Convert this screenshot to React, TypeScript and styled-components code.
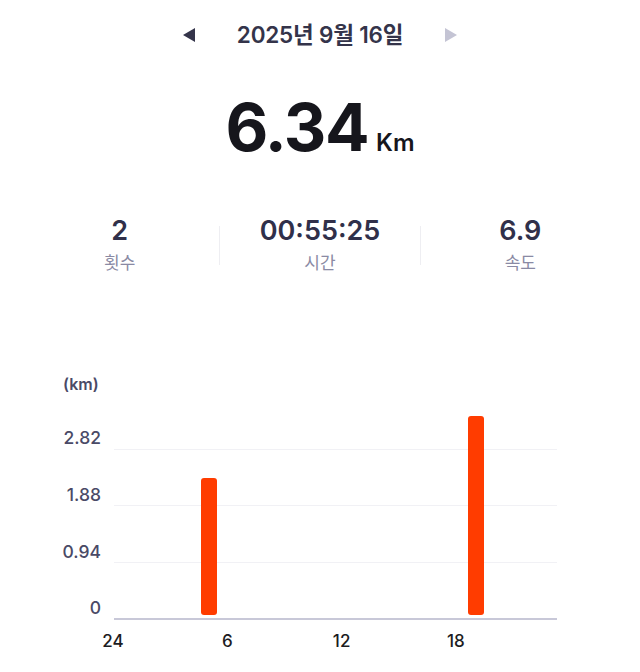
import React from "react";
import styled, { createGlobalStyle } from "styled-components";

const GlobalStyle = createGlobalStyle`
  body {
    margin: 0;
    background: #ffffff;
    font-family: "Inter", "Noto Sans CJK KR", sans-serif;
  }
`;

const HOUR_PX = 19.05;
const KM_PX = 52.7;

interface Run {
  hour: number;
  km: number;
}

const runs: Run[] = [
  { hour: 5, km: 2.6 },
  { hour: 19, km: 3.78 },
];

const yTicks = ["2.82", "1.88", "0.94", "0"];
const xTicks = [
  { hour: 0, label: "24" },
  { hour: 6, label: "6" },
  { hour: 12, label: "12" },
  { hour: 18, label: "18" },
];

const Page = styled.div`
  width: 640px;
  height: 672px;
  overflow: hidden;
`;

const DateNav = styled.div`
  display: flex;
  justify-content: center;
  align-items: center;
  gap: 42px;
  padding-top: 20px;
  height: 30px;
`;

const Arrow = styled.span<{ $dir: "left" | "right"; $muted?: boolean }>`
  width: 0;
  height: 0;
  border-top: 7px solid transparent;
  border-bottom: 7px solid transparent;
  ${(p) =>
    p.$dir === "left"
      ? `border-right: 12px solid ${p.$muted ? "#c4c4d4" : "#34344a"};`
      : `border-left: 12px solid ${p.$muted ? "#c4c4d4" : "#34344a"};`}
`;

const DateText = styled.div`
  font-size: 22.5px;
  font-weight: 600;
  color: #34344a;
  line-height: 30px;
  letter-spacing: -0.2px;
`;

const Total = styled.div`
  display: flex;
  justify-content: center;
  align-items: baseline;
  gap: 8px;
  margin-top: 44px;
`;

const TotalValue = styled.div`
  font-size: 66px;
  font-weight: 700;
  line-height: 1;
  color: #16161c;
  letter-spacing: -1.5px;
`;

const TotalUnit = styled.div`
  font-size: 24px;
  font-weight: 600;
  color: #16161c;
  margin-bottom: 3px;
`;

const Stats = styled.div`
  display: grid;
  grid-template-columns: 1fr 1px 1fr 1px 1fr;
  align-items: center;
  width: 600px;
  margin: 57px auto 0;
`;

const Stat = styled.div`
  display: flex;
  flex-direction: column;
  align-items: center;
  gap: 8px;
`;

const StatValue = styled.div`
  font-size: 27px;
  font-weight: 600;
  line-height: 1;
  color: #30304a;
`;

const StatLabel = styled.div`
  font-size: 17px;
  line-height: 22px;
  color: #8a8aa4;
`;

const Divider = styled.div`
  width: 1px;
  height: 39px;
  background: #eeeef2;
`;

const Chart = styled.div`
  margin-top: 101px;
  padding-left: 60px;
`;

const Unit = styled.div`
  font-size: 16px;
  font-weight: 600;
  line-height: 18px;
  color: #4a4a66;
  padding-left: 3px;
`;

const ChartGrid = styled.div`
  display: grid;
  grid-template-columns: 41px 443px;
  grid-template-rows: repeat(4, 56.7px);
  column-gap: 13px;
`;

const YLabel = styled.div`
  grid-column: 1;
  align-self: end;
  text-align: right;
  font-size: 17.5px;
  font-weight: 500;
  line-height: 1;
  color: #4a4a66;
  padding-bottom: 3px;
`;

const GridLine = styled.div<{ $base?: boolean }>`
  grid-column: 2;
  border-bottom: ${(p) => (p.$base ? "2px solid #c8c8d8" : "1px solid #f1f1f5")};
`;

const Plot = styled.div`
  grid-column: 2;
  grid-row: 1 / -1;
  position: relative;
`;

const Bar = styled.div`
  position: absolute;
  bottom: 5px;
  width: 16px;
  background: #ff3c00;
  border-radius: 3px;
`;

const XAxis = styled.div`
  position: relative;
  margin-left: 54px;
  margin-top: 11px;
  height: 20px;
`;

const XLabel = styled.span`
  position: absolute;
  top: 0;
  transform: translateX(-50%);
  font-size: 17px;
  font-weight: 500;
  line-height: 20px;
  color: #1c1c22;
`;

export default function App() {
  return (
    <Page>
      <GlobalStyle />
      <DateNav>
        <Arrow $dir="left" />
        <DateText>2025년 9월 16일</DateText>
        <Arrow $dir="right" $muted />
      </DateNav>

      <Total>
        <TotalValue>6.34</TotalValue>
        <TotalUnit>Km</TotalUnit>
      </Total>

      <Stats>
        <Stat>
          <StatValue>2</StatValue>
          <StatLabel>횟수</StatLabel>
        </Stat>
        <Divider />
        <Stat>
          <StatValue>00:55:25</StatValue>
          <StatLabel>시간</StatLabel>
        </Stat>
        <Divider />
        <Stat>
          <StatValue>6.9</StatValue>
          <StatLabel>속도</StatLabel>
        </Stat>
      </Stats>

      <Chart>
        <Unit>(km)</Unit>
        <ChartGrid>
          {yTicks.map((t, i) => (
            <React.Fragment key={t}>
              <YLabel style={{ gridRow: i + 1 }}>{t}</YLabel>
              <GridLine style={{ gridRow: i + 1 }} $base={i === yTicks.length - 1} />
            </React.Fragment>
          ))}
          <Plot>
            {runs.map((r) => (
              <Bar
                key={r.hour}
                style={{ left: r.hour * HOUR_PX - 8, height: r.km * KM_PX }}
              />
            ))}
          </Plot>
        </ChartGrid>
        <XAxis>
          {xTicks.map((t) => (
            <XLabel key={t.label} style={{ left: t.hour * HOUR_PX - 1 }}>
              {t.label}
            </XLabel>
          ))}
        </XAxis>
      </Chart>
    </Page>
  );
}
